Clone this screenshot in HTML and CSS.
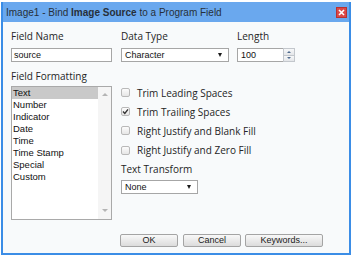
FILE: index.html
```html
<!DOCTYPE html>
<html>
<head>
<meta charset="utf-8">
<link rel="stylesheet" href="styles.css">
</head>
<body>
<div class="dialog">
  <div class="titlebar">
    <span class="title">Image1 - Bind <b>Image Source</b> to a Program Field</span>
    <span class="close"><svg width="9" height="9" viewBox="0 0 9 9"><path d="M2 2 L7 7 M7 2 L2 7" stroke="#fff" stroke-width="1.6"/></svg></span>
  </div>
  <div class="body">
    <div class="top-row">
      <div class="field">
        <span class="label">Field Name</span>
        <div class="input w-name">source</div>
      </div>
      <div class="field">
        <span class="label">Data Type</span>
        <div class="select w-type"><span>Character</span><i class="arrow"></i></div>
      </div>
      <div class="field">
        <span class="label">Length</span>
        <div class="input spin w-len"><span class="val">100</span>
          <span class="spinner"><span class="sbtn up"><i></i></span><span class="sbtn down"><i></i></span></span>
        </div>
      </div>
    </div>
    <div class="mid-row">
      <div class="left">
        <span class="label lbl-gap">Field Formatting</span>
        <div class="listbox">
          <div class="items">
            <div class="item sel">Text</div>
            <div class="item">Number</div>
            <div class="item">Indicator</div>
            <div class="item">Date</div>
            <div class="item">Time</div>
            <div class="item">Time Stamp</div>
            <div class="item">Special</div>
            <div class="item">Custom</div>
          </div>
          <div class="scroll"><i class="sup"></i><i class="sdown"></i></div>
        </div>
      </div>
      <div class="right">
        <div class="crow"><span class="cb"></span>Trim Leading Spaces</div>
        <div class="crow"><span class="cb"><svg width="7" height="7" viewBox="0 0 7 7"><path d="M1 3.6 L2.8 5.4 L6 1.4" fill="none" stroke="#333" stroke-width="1.4"/></svg></span>Trim Trailing Spaces</div>
        <div class="crow"><span class="cb"></span>Right Justify and Blank Fill</div>
        <div class="crow"><span class="cb"></span>Right Justify and Zero Fill</div>
        <span class="label tt">Text Transform</span>
        <div class="select w-none"><span>None</span><i class="arrow"></i></div>
      </div>
    </div>
    <div class="buttons">
      <div class="btn w-ok">OK</div>
      <div class="btn w-cancel">Cancel</div>
      <div class="btn w-kw">Keywords...</div>
    </div>
  </div>
</div>
</body>
</html>
```
FILE: styles.css
```css
* { box-sizing: border-box; }
body { margin: 0; background: #fff; }

.dialog {
  margin: 2px 0 0 1px;
  width: 350px;
  height: 253px;
  border: 2px solid #3b8de6;
  border-top: 0;
  background: #f8fafb;
  display: flex;
  flex-direction: column;
}

.titlebar {
  height: 20px;
  flex: none;
  background: #6aa8ee;
  display: flex;
  align-items: center;
  justify-content: space-between;
  padding: 0 1px 0 3px;
  font: 10px "Liberation Sans", Arial, sans-serif;
  color: #27303a;
}
.close {
  width: 11px;
  height: 11px;
  background: #dc4848;
  border: 1px solid #b83232;
  display: flex;
  align-items: center;
  justify-content: center;
  margin-right: 1px;
}
.close svg { display: block; }

.body {
  flex: 1;
  padding: 8px 8px 0 8px;
}

.label {
  display: block;
  font: 10px/13px "Open Sans", sans-serif;
  color: #252525;
  margin-bottom: 5px;
}

.top-row {
  display: grid;
  grid-template-columns: 110px 116px 58px;
}

.input, .select {
  height: 14px;
  border: 1px solid #a6a6a6;
  background: #fff;
  font: 9px/12px "Liberation Sans", Arial, sans-serif;
  color: #111;
}
.input { padding-left: 2px; }
.w-name { width: 101px; }
.w-type { width: 108px; }
.w-len { width: 58px; }
.w-none { width: 77px; }

.select {
  display: flex;
  align-items: center;
  justify-content: space-between;
  padding: 0 6px 0 3px;
}
.arrow {
  width: 0;
  height: 0;
  border-left: 2.5px solid transparent;
  border-right: 2.5px solid transparent;
  border-top: 4px solid #1a1a1a;
}

.spin {
  display: flex;
  padding: 0 0 0 3px;
}
.spin .val { flex: 1; }
.spinner {
  width: 12px;
  display: flex;
  flex-direction: column;
  margin: -1px -1px -1px 0;
}
.sbtn {
  flex: 1;
  border: 1px solid #c3c7cc;
  background: linear-gradient(#f7f8f9, #e4e6e9);
  display: flex;
  align-items: center;
  justify-content: center;
}
.sbtn.down { border-top: 0; }
.sbtn i {
  width: 0;
  height: 0;
  border-left: 2px solid transparent;
  border-right: 2px solid transparent;
}
.up i { border-bottom: 2px solid #4f6a8e; }
.down i { border-top: 2px solid #4f6a8e; }

.mid-row {
  display: grid;
  grid-template-columns: 110px 1fr;
  margin-top: 8px;
}
.lbl-gap { margin-bottom: 3px; }

.listbox {
  width: 101px;
  height: 134px;
  border: 1px solid #a9a9a9;
  background: #fff;
  display: flex;
}
.items { flex: 1; }
.item {
  height: 12px;
  font: 9.5px/12px "Liberation Sans", Arial, sans-serif;
  color: #111;
  padding-left: 1px;
}
.item.sel { background: #c9c9c9; }
.scroll {
  width: 13px;
  background: #f5f5f5;
  display: flex;
  flex-direction: column;
  justify-content: space-between;
  align-items: center;
  padding: 6px 0 7px;
}
.sup, .sdown {
  width: 0;
  height: 0;
  border-left: 3px solid transparent;
  border-right: 3px solid transparent;
}
.sup { border-bottom: 3px solid #b4b4b4; }
.sdown { border-top: 3px solid #b4b4b4; }

.right { padding-top: 13px; }
.crow {
  height: 19.2px;
  display: flex;
  align-items: center;
  font: 10px "Open Sans", sans-serif;
  color: #252525;
}
.cb {
  width: 9px;
  height: 9px;
  border: 1px solid #b9b9b9;
  border-radius: 2px;
  background: linear-gradient(#fcfcfc, #e6e6e6);
  margin-right: 7px;
  display: flex;
  align-items: center;
  justify-content: center;
}
.cb svg { display: block; }
.tt { margin-top: 3px; margin-bottom: 4px; }

.buttons {
  display: flex;
  margin: 14px 0 0 109px;
}
.btn {
  height: 13px;
  border: 1px solid #a4a4a4;
  border-radius: 2px;
  background: linear-gradient(#f8f8f8, #dcdcdc);
  font: 9px/11px "Liberation Sans", Arial, sans-serif;
  color: #1a1a1a;
  text-align: center;
}
.w-ok { width: 58px; margin-right: 5px; }
.w-cancel { width: 58px; margin-right: 4px; }
.w-kw { width: 78px; }
```
